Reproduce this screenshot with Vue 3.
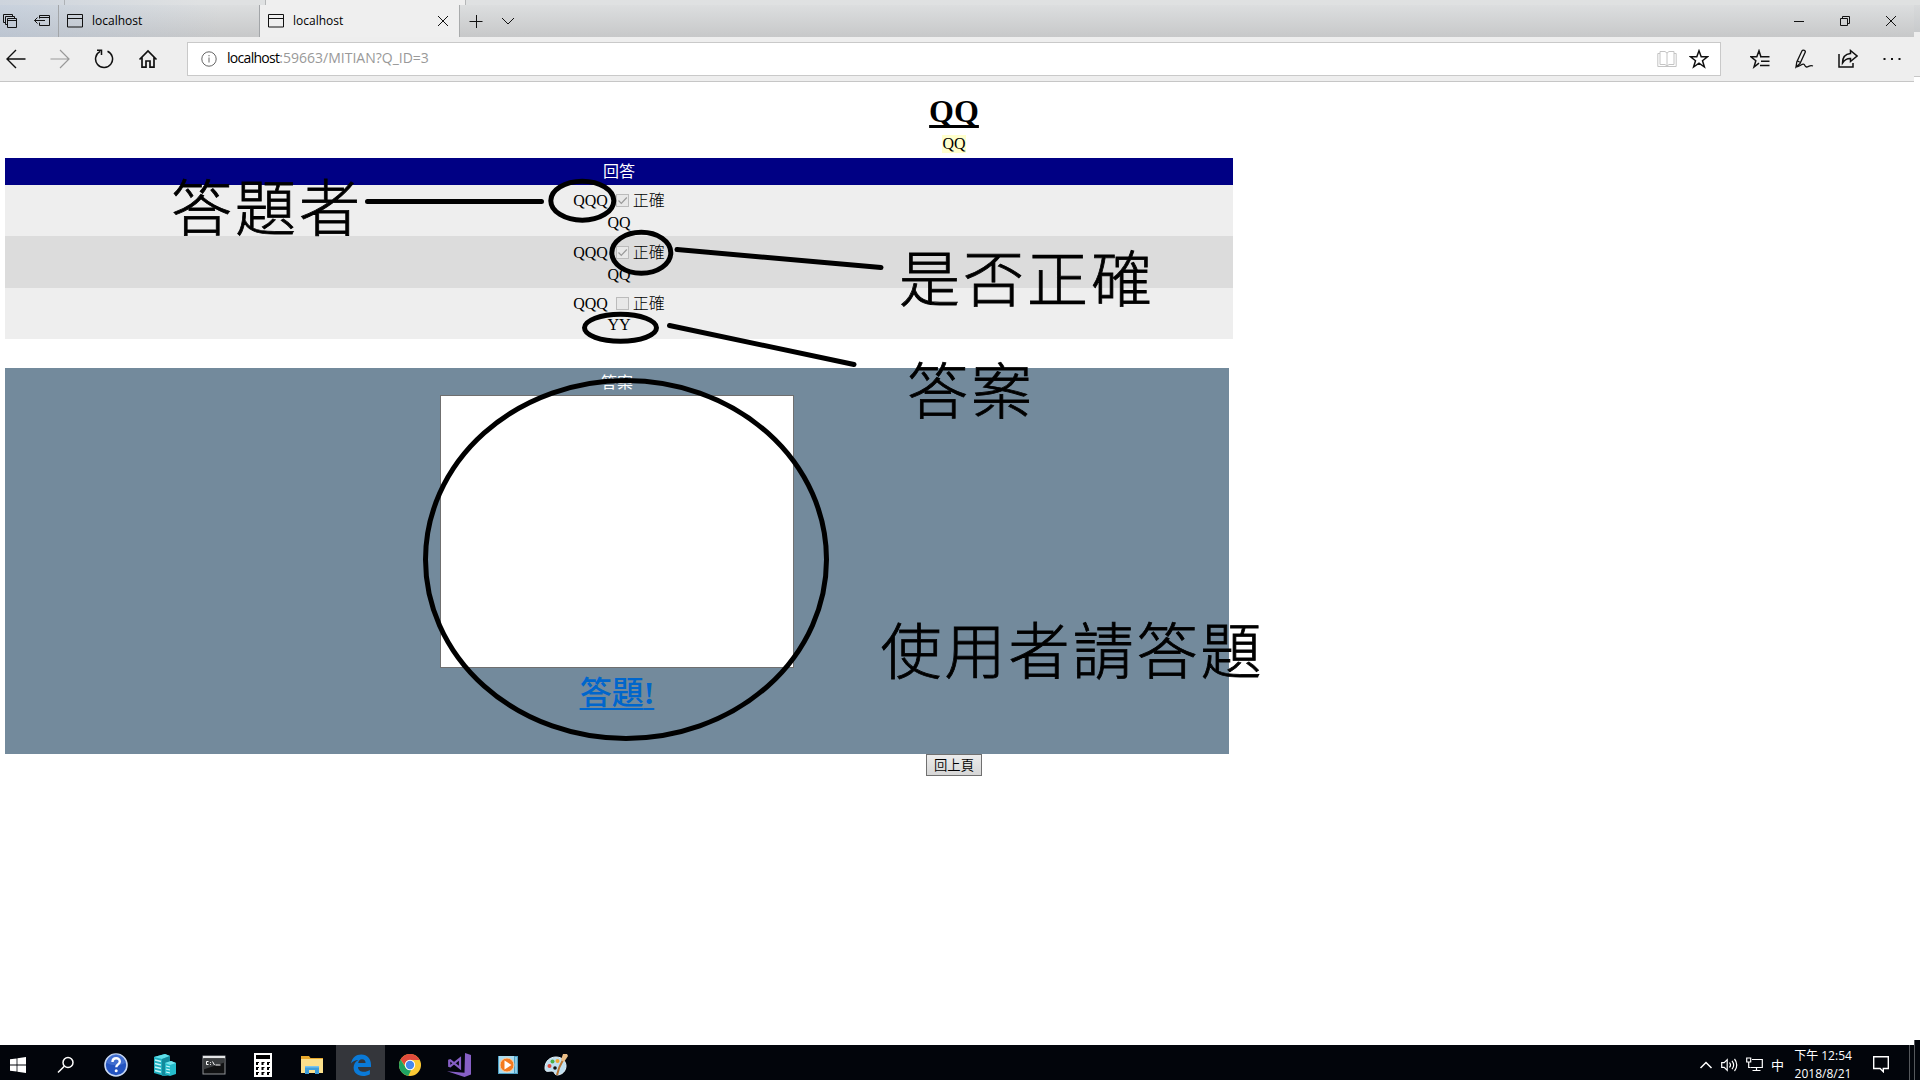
<script setup>
const answers = [
  { author: 'QQQ', correct: true, text: 'QQ' },
  { author: 'QQQ', correct: true, text: 'QQ' },
  { author: 'QQQ', correct: false, text: 'YY' },
]
</script>

<template>
  <div class="screen">
    <div class="strip"><i class="s1"></i><i class="s2"></i><i class="s3"></i></div>
    <div class="behind"></div>

    <header class="tabs">
      <div class="tools">
        <svg width="16" height="16" viewBox="0 0 16 16"><path d="M1.500 9.500v-8h9M3.500 11.500v-8h9M1.500 9.500h2M10.500 1.500v2M3.500 11.500h2M12.500 3.500v2M5.500 5.500h9v9h-9zM5.500 7.500h9" /></svg>
        <svg width="18" height="14" viewBox="0 0 18 14"><path d="M6.500 4.500v-3h10v10h-10v-3M6.500 3.500h10M12 6.500H1.500M4.500 3.500l-3 3 3 3" /></svg>
      </div>
      <div class="tab">
        <svg width="16" height="14" viewBox="0 0 16 14"><path d="M.5.500h15v12.500H.5zM.5 4.500h15" /></svg>
        <span>localhost</span>
      </div>
      <div class="tab active">
        <svg width="16" height="14" viewBox="0 0 16 14"><path d="M.5.500h15v12.500H.5zM.5 4.500h15" /></svg>
        <span>localhost</span>
        <svg class="close" width="12" height="12" viewBox="0 0 12 12"><path d="M1 1l10 10M11 1L1 11" /></svg>
      </div>
      <div class="newtab">
        <svg width="14" height="14" viewBox="0 0 14 14"><path d="M.5 7.500h13M7.500 1v13" /></svg>
        <svg width="14" height="14" viewBox="0 0 14 14"><path d="M1 4l6 6 6-6" /></svg>
      </div>
      <div class="winbtns">
        <span><svg width="12" height="12" viewBox="0 0 12 12"><path d="M1 6.500h10" /></svg></span>
        <span><svg width="12" height="12" viewBox="0 0 12 12"><path d="M1.500 3.500h7v7h-7zM3.500 3.500v-2h7v7h-2" /></svg></span>
        <span><svg width="12" height="12" viewBox="0 0 12 12"><path d="M1 1l10 10M11 1L1 11" /></svg></span>
      </div>
    </header>

    <nav class="bar">
      <div class="navbtns">
        <span><svg width="20" height="20" viewBox="0 0 20 20"><path d="M19.500 10H1.500M10 1L1 10l9 9" stroke-width="1.400" /></svg></span>
        <span class="off"><svg width="20" height="20" viewBox="0 0 20 20"><path d="M.5 10h18M10 1l9 9-9 9" stroke-width="1.200" /></svg></span>
        <span><svg width="20" height="20" viewBox="0 0 20 20"><path d="M13.500 2.200A8.500 8.500 0 1 1 6.200 2.400M3 1.200h4.500v4.800" stroke-width="1.500" /></svg></span>
        <span><svg width="20" height="20" viewBox="0 0 20 20"><path d="M1.500 10.500L10 2l8.500 8.500M4 8.500V18.200h4V12h4v6.200h4V8.500" stroke-width="1.700" /></svg></span>
      </div>
      <div class="address">
        <svg width="16" height="16" viewBox="0 0 16 16" class="info"><circle cx="8" cy="8" r="7.200" /><path d="M8 6.500v5M8 4v1.300" /></svg>
        <span class="url"><b>localhost</b>:59663/MITIAN?Q_ID=3</span>
        <svg class="book" width="20" height="18" viewBox="0 0 20 18"><path d="M3 1.500h5l2 1.500 2-1.500h5v13h-5l-2 1.500-2-1.500H3zM10 3v13M3 3.500H.8v13h18.400v-13H17" /></svg>
        <svg class="star" width="20" height="20" viewBox="0 0 20 20"><path d="M10 1.800l2.200 6h6.300l-5 3.900 1.900 6.300-5.400-3.800L4.600 18l1.900-6.300-5-3.900h6.300z" stroke-width="1.500" /></svg>
      </div>
      <div class="actions">
        <span><svg width="20" height="20" viewBox="0 0 20 20"><path d="M12.500 7.800h-1.600L9 1.800l-2.200 6H1l4.800 3.900L4 18l5-3.800M10 7.800h9.500M11 12.300h8.500M10 16.500h9.500" stroke-width="1.500" /></svg></span>
        <span><svg width="20" height="20" viewBox="0 0 20 20"><path d="M2 18l.8-5L8 1.800c1-1.500 4-.3 3.200 1.500L6 14.500zM3.500 12l3 1.500M2 18c4 0 5-3 7.500-2.800 1.700.2 1 2.500 3 2.800 2 .2 3-2.200 6.500-1" stroke-width="1.300" /></svg></span>
        <span><svg width="20" height="20" viewBox="0 0 20 20"><path d="M1 5v13h14v-4M12.500 1.500L19 7l-6.500 5.500V9.500C9 9.300 6.800 10.500 4.500 14c0-5.500 3-9 8-9.500z" stroke-width="1.500" /></svg></span>
        <span><svg width="20" height="20" viewBox="0 0 20 20"><path d="M1.500 10h2M9 10h2M16.500 10h2" stroke-width="2" /></svg></span>
      </div>
    </nav>

    <main class="page">
      <h1>QQ</h1>
      <div class="sub"><span>QQ</span></div>
      <section class="answers">
        <div class="head">回答</div>
        <div v-for="(a, i) in answers" :key="i" class="row">
          <div class="line">
            <span>{{ a.author }}</span>
            <i class="check"><svg v-if="a.correct" width="11" height="11" viewBox="0 0 11 11"><path d="M1.500 5.500l2.800 2.800L9.800 2.500" /></svg></i>
            <span>正確</span>
          </div>
          <div class="text">{{ a.text }}</div>
        </div>
      </section>
      <section class="reply">
        <div class="label">答案</div>
        <div class="area"></div>
        <a class="send">答題<b>!</b></a>
      </section>
      <div class="back"><button>回上頁</button></div>
    </main>

    <svg class="notes" width="1920" height="1045" viewBox="0 0 1920 1045">
      <g class="ink">
        <ellipse cx="582.300" cy="200.700" rx="31.500" ry="19.500" />
        <ellipse cx="641.300" cy="252.700" rx="29.500" ry="20.500" />
        <ellipse cx="620.500" cy="327.800" rx="36" ry="13.500" />
        <ellipse cx="626" cy="559.500" rx="200.500" ry="179" />
        <path d="M367.500 201.500H541.500M677 249.500L881 267.500M669.500 325.500L854 364.500" />
      </g>
      <text x="171" y="231.300">答題者</text>
      <text x="899" y="302.300">是否正確</text>
      <text x="907" y="414.300">答案</text>
      <text x="880.500" y="674.300">使用者請答題</text>
    </svg>

    <footer class="taskbar">
      <span class="start"><svg width="16" height="16" viewBox="0 0 16 16"><path fill="#fff" d="M0 2.300L6.600 1.400V7.600H0zM7.400 1.300L16 0V7.600H7.400zM0 8.400H6.600V14.600L0 13.700zM7.400 8.400H16V16L7.400 14.800z" /></svg></span>
      <span class="search"><svg width="18" height="18" viewBox="0 0 18 18"><g fill="none" stroke="#fff" stroke-width="1.500"><circle cx="11" cy="6.500" r="5" /><path d="M7.300 10.200L1 16.500" /></g></svg></span>
      <span class="app"><svg width="24" height="24" viewBox="0 0 24 24"><circle cx="12" cy="12" r="11" fill="#2454c0" stroke="#c8d8f2" stroke-width="1.600" /><path d="M3 10a9 9 0 0 1 18 0c-5 3-13 3-18 0z" fill="#5580d8" opacity=".6" /><path d="M8.500 9c0-5 7.500-4.800 7.300-.3-.1 2.600-3.500 2.700-3.500 5.500" fill="none" stroke="#fff" stroke-width="2.400" /><circle cx="12.200" cy="17.800" r="1.500" fill="#fff" /></svg></span>
      <span class="app"><svg width="24" height="24" viewBox="0 0 24 24"><path fill="#1fb0c0" d="M1 4l11-3 5 2v19l-6 1L1 20z" /><path fill="#5fe0ea" d="M1 4l11-3 5 2-8 3z" /><path fill="#138a9c" d="M9 6l8-3v19l-8 1z" /><path d="M2 7l6 1.500M2 10.500L8 12M2 14l6 1.500M2 17.500L8 19" stroke="#c4f6fa" stroke-width="1.300" /><path fill="#25bccb" d="M12 10l6-2 5 2v11l-6 2-5-2z" /><path fill="#72e6ef" d="M12 10l6-2 5 2-6 2z" /><path d="M13 13l4 1M13 16l4 1M13 19l4 1" stroke="#d4fafc" stroke-width="1.200" /></svg></span>
      <span class="app"><svg width="24" height="20" viewBox="0 0 24 20"><path fill="#8f9396" d="M.5.500h23v19H.5z" /><path fill="#e3e5e6" d="M1 1h22v2H1z" /><path fill="#101112" d="M1.500 3.500h21v15h-21z" /><path fill="#3a3d3f" d="M1.500 3.500h21v4l-21 7z" /><path d="M6.500 6.500h-2v3h2M8.500 7v.8M8.500 9v.8M10.500 6.500l2 3.500M13.500 10h5" fill="none" stroke="#fff" /></svg></span>
      <span class="app"><svg width="18" height="24" viewBox="0 0 18 24"><path fill="#fff" d="M0 0h18v24H0z" /><path fill="#000" d="M2 2h14v4H2zM2 9h3v1H4v2H2zM7.500 9h3v1h-1v2h-2zM13 9h3v1h-1v2h-2zM2 14h3v1H4v2H2zM7.500 14h3v1h-1v2h-2zM13 14h3v1h-1v2h-2zM2 19h3v1H4v2H2zM7.500 19h3v1h-1v2h-2zM13 19h3v1h-1v2h-2z" /></svg></span>
      <span class="app"><svg width="22" height="20" viewBox="0 0 22 20"><path fill="#e8a92c" d="M0 1h8l1.500 2H22v4H0z" /><path fill="#fbe08c" d="M0 4h22v14H0z" /><path fill="#3f9fdc" d="M4 19v-8h14v8h-4v-4H8v4z" /><path fill="#78c4ee" d="M4 11h14v1.500H4z" /></svg></span>
      <span class="app on"><svg width="22" height="22" viewBox="0 0 22 22"><path fill="#0a7ad8" d="M1 9.500C2.200 3.500 6 .5 11.200.5 17.500.5 21 5 21 10.700v2.200H8c.2 3.400 2.700 4.800 5.900 4.800 2.200 0 4.100-.7 6-1.800v4.300C17.900 21.400 15.500 22 13 22 7.300 22 3.600 18.700 3.600 13.600c0-3.500 1.900-6.300 4.900-7.700C5.200 5.900 2.500 7.200 1 9.500zM8.200 9h7.400c0-2.400-1.300-3.800-3.600-3.800C9.900 5.200 8.500 6.700 8.200 9z" /></svg></span>
      <span class="app"><svg width="22" height="22" viewBox="0 0 22 22"><circle cx="11" cy="11" r="11" fill="#fbc934" /><path fill="#df4b3c" d="M1.500 5.500a11 11 0 0 1 19 0L20.500 6H11a5 5 0 0 0-4.600 3L5.500 11z" /><path fill="#1ea362" d="M1.500 5.500L6.700 13.500A5 5 0 0 0 11 16l1 .2-2.800 5.700A11 11 0 0 1 1.500 5.500z" /><circle cx="11" cy="11" r="5.200" fill="#fff" /><circle cx="11" cy="11" r="4.200" fill="#4788ee" /></svg></span>
      <span class="app"><svg width="24" height="24" viewBox="0 0 24 24"><path fill="#865fc5" d="M18 0l6 2v19.500L17.500 24 0 18.200l17.500 1.600z" /><path fill="none" stroke="#865fc5" stroke-width="2.200" d="M2.200 7.500v5.500l1 .3L13 5.500v9.500L3.200 7.200z" /></svg></span>
      <span class="app"><svg width="20" height="20" viewBox="0 0 20 20"><path fill="#4d9fc3" d="M0 1h20v18H0z" /><path fill="#aadcf0" d="M1 1h15v17H1z" /><path fill="#8ecae4" d="M17 2h2v16h-2z" /><circle cx="9" cy="10" r="7" fill="#f47b20" stroke="#fbd3ac" /><path fill="#fff" d="M6.500 5.500l7 4.500-7 4.500z" /></svg></span>
      <span class="app"><svg width="24" height="24" viewBox="0 0 24 24"><path fill="#bfdff0" stroke="#e9f5fb" d="M1 15C1 8 6 4 12 4c6 0 10 4 10 9s-4 9-9 9c-3 0-2-4-5-4s-7 2-7-3z" /><circle cx="5.500" cy="13" r="2" fill="#e04a3c" /><circle cx="8.500" cy="8.500" r="2" fill="#49b04a" /><circle cx="13.500" cy="8" r="2" fill="#f0a531" /><circle cx="11" cy="15" r="1.800" fill="#111" /><path d="M13 22c1-5 3-10 6-15" stroke="#b97532" stroke-width="2" fill="none" /><path fill="#e9bd86" d="M17 7l2-6 4 0 1 2-4 6z" /></svg></span>

      <div class="tray">
        <svg class="t1" width="14" height="8" viewBox="0 0 14 8"><path d="M1.500 7L7 1.500 12.500 7" stroke-width="1.500" /></svg>
        <svg class="t2" width="17" height="14" viewBox="0 0 17 14"><path d="M.7 4.700h2.500l3-3v10.600l-3-3H.7zM8.500 4.500c1.200 1.500 1.200 3.500 0 5M11 2.800c2 2.500 2 5.900 0 8.400M13.500 1c3 3.500 3 8.500 0 12" stroke-width="1.200" /></svg>
        <svg class="t3" width="17" height="15" viewBox="0 0 17 15"><path d="M6 2.500h10.300v8H5M10.500 10.500v3M6.500 13.500h8M.7 1h4v4h-4zM2.700 5v5.500h2" stroke-width="1.200" /></svg>
        <span class="ime">中</span>
        <div class="clock"><span>下午 12:54</span><span>2018/8/21</span></div>
        <svg class="t4" width="16" height="17" viewBox="0 0 16 17"><path d="M.7.700h14.600v11.800h-5v3.200l-3.200-3.200H.7z" stroke-width="1.400" /></svg>
        <i class="peek"></i>
      </div>
    </footer>
    <div class="edge"></div>
  </div>
</template>

<style>
body { margin: 0; overflow: hidden; background: #fff; }
</style>

<style scoped>
.screen { position: relative; width: 1920px; height: 1080px; background: #fff; overflow: hidden; display: flex; flex-direction: column; font-family: "Liberation Serif", "Noto Sans CJK TC", serif; color: #000; }
.screen svg { display: block; flex: none; }
i { display: block; font-style: normal; }
.strip { height: 5px; flex: none; background: linear-gradient(90deg, #cdd4dd, #dfe1e2 200px, #dfe1e1); display: flex; }
.strip .s1 { width: 64px; border-right: 1px solid #aeb2b6; }
.strip .s2 { width: 200px; border-right: 1px solid #b5b7b8; }
.strip .s3 { width: 199px; background: #efefef; border-right: 1px solid #b5b7b8; }
.behind { position: absolute; left: 1914px; top: 5px; width: 6px; height: 71px; background: linear-gradient(#d8dadb, #c8cacc 27px, #eee 27px); border-bottom: 1px solid #c6c6c6; }

.tabs { width: 1914px; height: 32px; flex: none; display: flex; background: linear-gradient(90deg, rgba(175, 193, 218, .45), rgba(200, 210, 225, 0) 220px), linear-gradient(#dcdedf, #c7c8c9); font: 12px "Open Sans", "Noto Sans", sans-serif; }
.tabs svg, .bar svg { fill: none; stroke: #111; }
.tools { width: 58px; display: flex; align-items: center; box-sizing: border-box; padding: 0 0 0 2px; gap: 15px; }
.tab { width: 201px; box-sizing: border-box; border-left: 1px solid #a2a5a8; display: flex; align-items: center; padding-left: 8px; }
.tab span { margin: -2px 0 0 9px; letter-spacing: 0; }
.tab.active { background: #efefef; border-right: 1px solid #a9abac; }
.tab .close { margin: 0 10px 0 auto; }
.newtab { display: flex; align-items: center; gap: 18px; padding-left: 9px; }
.winbtns { margin-left: auto; display: flex; }
.winbtns span { width: 46px; display: flex; align-items: center; justify-content: center; }

.bar { width: 1914px; height: 44px; flex: none; background: #eee; border-bottom: 1px solid #c6c6c6; display: flex; align-items: center; }
.navbtns { display: flex; margin-left: -6px; }
.navbtns span, .actions span { width: 44px; display: flex; justify-content: center; }
.navbtns .off svg { stroke: #999; }
.address { box-sizing: border-box; margin-left: 17px; width: 1534px; height: 34px; background: #fff; border: 1px solid #c9c9c9; display: flex; align-items: center; padding: 0 11px 0 13px; font: 14px "Open Sans", "Noto Sans", sans-serif; }
.info { stroke: #666 !important; }
.url { margin: -3px auto 0 10px; color: #999; letter-spacing: 0; }
.url b { font-weight: 400; color: #000; letter-spacing: -.7px; }
.book { stroke: #c4c4c4 !important; }
.star { margin-left: 12px; }
.actions { display: flex; margin-left: 17px; }

.page { flex: 1; width: 1898px; margin-left: 5px; display: flex; flex-direction: column; font-size: 16px; }
h1 { margin: 11px 0 0; height: 40px; line-height: 37px; font-size: 32px; text-align: center; text-decoration: underline; text-decoration-thickness: 3px; text-underline-offset: 3px; text-decoration-skip-ink: none; }
.sub { height: 25px; text-align: center; display: flex; justify-content: center; align-items: flex-start; }
.sub span { background: #ffffcc; height: 18px; line-height: 18px; margin-top: 2px; }
.answers { width: 1228px; }
.head { height: 27px; background: #000084; color: #fff; text-align: center; line-height: 28px; }
.row { height: 51px; background: #eee; }
.row:nth-child(3) { height: 51px; padding-top: 1px; background: #dcdcdc; }
.line { height: 30px; display: flex; justify-content: center; align-items: center; line-height: 30px; box-sizing: border-box; padding-top: 1px; }
.line span:last-child { font-weight: 300; }
.check { box-sizing: border-box; width: 13px; height: 13px; border: 1px solid #bbb; margin: -1px 4px 0 8px; background: #e8e8e8; }
.check svg { fill: none; stroke: #999; stroke-width: 1.2; }
.text { text-align: center; line-height: 18px; height: 18px; margin-top: -1px; }
.row:nth-child(4) .text { margin-top: -2px; }
.reply { width: 1224px; height: 386px; margin-top: 29px; background: #738a9c; display: flex; flex-direction: column; align-items: center; }
.label { height: 27px; line-height: 30px; color: #fff; }
.area { box-sizing: border-box; width: 354px; height: 273px; background: #fff; border: 1px solid #6f6f6f; }
.send { color: #0066cc; font-size: 32px; font-weight: 500; line-height: 40px; height: 40px; margin-top: 5px; text-decoration: underline; text-decoration-thickness: 2px; text-underline-offset: 4px; text-decoration-skip-ink: none; }
.send b { font-weight: 700; }
.back { display: flex; justify-content: center; }
button { box-sizing: border-box; width: 56px; height: 22px; padding: 0; border: 1px solid #707070; background: linear-gradient(#ececec, #d6d6d6); font: 350 13.333px/18px "Noto Sans CJK TC", sans-serif; color: #000; white-space: nowrap; }

.notes { position: absolute; left: 0; top: 0; }
.ink { fill: none; stroke: #000; stroke-width: 5; stroke-linecap: round; }
.notes text { font: 300 61px "Noto Sans CJK TC", sans-serif; letter-spacing: 3px; fill: #000; stroke: #000; stroke-width: .8px; }

.taskbar { height: 35px; flex: none; width: 1914px; background: #02050b; display: flex; }
.taskbar > span { display: flex; align-items: center; justify-content: center; padding-top: 4px; box-sizing: border-box; }
.start { width: 36px; }
.search { width: 56px; padding-left: 4px; }
.app { width: 48.9px; }
.app.on { background: #34363b; }
.tray { margin-left: auto; display: flex; align-items: center; color: #fff; font-family: "Open Sans", "Noto Sans CJK TC", sans-serif; font-size: 12px; }
.tray svg { fill: none; stroke: #fff; }
.t2, .t3 { margin: 4px 0 0 8px; }
.t1 { margin-top: 4px; }
.ime { margin: 3px 0 0 8px; font-size: 13px; }
.clock { display: flex; flex-direction: column; align-items: center; width: 62px; margin: 5px 0 0 8px; line-height: 18px; letter-spacing: 0; white-space: nowrap; }
.t4 { margin: 4px 0 0 19px; }
.peek { width: 1px; height: 35px; background: #55585c; margin: 0 4px 0 20px; }
.edge { position: absolute; left: 1914px; top: 1040px; width: 5px; height: 40px; background: #02050b; border-left: 1px solid #55585c; }
</style>
